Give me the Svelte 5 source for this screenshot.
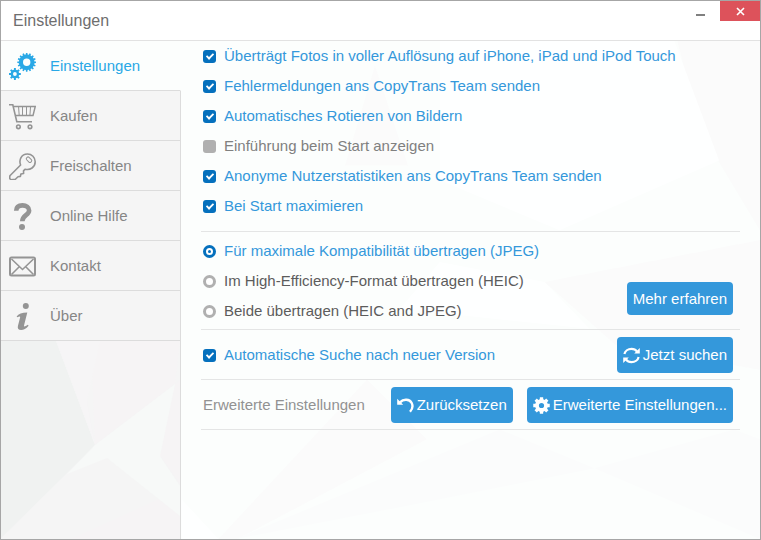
<script lang="ts">
  type IconName = "gears" | "cart" | "key" | "help" | "mail" | "info";

  const navItems: { id: IconName; label: string }[] = [
    { id: "gears", label: "Einstellungen" },
    { id: "cart", label: "Kaufen" },
    { id: "key", label: "Freischalten" },
    { id: "help", label: "Online Hilfe" },
    { id: "mail", label: "Kontakt" },
    { id: "info", label: "Über" },
  ];

  let active = $state<IconName>("gears");

  let options = $state([
    { label: "Überträgt Fotos in voller Auflösung auf iPhone, iPad und iPod Touch", on: true },
    { label: "Fehlermeldungen ans CopyTrans Team senden", on: true },
    { label: "Automatisches Rotieren von Bildern", on: true },
    { label: "Einführung beim Start anzeigen", on: false },
    { label: "Anonyme Nutzerstatistiken ans CopyTrans Team senden", on: true },
    { label: "Bei Start maximieren", on: true },
  ]);

  const formats = [
    { value: "jpeg", label: "Für maximale Kompatibilität übertragen (JPEG)" },
    { value: "heic", label: "Im High-Efficiency-Format übertragen (HEIC)" },
    { value: "both", label: "Beide übertragen (HEIC and JPEG)" },
  ];
  let format = $state("jpeg");
  let autoUpdate = $state(true);

  // Cog outline with a round hole, drawn with the evenodd rule
  function gear(cx: number, cy: number, teeth: number, outer: number, inner: number, hole: number, half = 0.2): string {
    const step = (Math.PI * 2) / teeth;
    const pts: string[] = [];
    for (let i = 0; i < teeth; i++) {
      const a = i * step - Math.PI / 2;
      for (const [off, r] of [[-half - 0.1, inner], [-half, outer], [half, outer], [half + 0.1, inner]]) {
        const t = a + off * step;
        pts.push(`${(cx + r * Math.cos(t)).toFixed(2)} ${(cy + r * Math.sin(t)).toFixed(2)}`);
      }
    }
    return `M${pts.join("L")}ZM${cx - hole} ${cy}a${hole} ${hole} 0 1 0 ${hole * 2} 0a${hole} ${hole} 0 1 0 ${-hole * 2} 0Z`;
  }
</script>

{#snippet navIcon(name: IconName)}
  <svg class="nav-icon" width="27" height="27" viewBox="0 0 27 27" fill="none" stroke="currentColor" aria-hidden="true">
    {#if name === "gears"}
      <path d={gear(17.7, 9.3, 16, 9.4, 7.8, 3.7)} fill="currentColor" fill-rule="evenodd" stroke="none" />
      <path d={gear(5.9, 21, 8, 6, 4.3, 1.9)} fill="currentColor" fill-rule="evenodd" stroke="none" />
    {:else if name === "cart"}
      <path d="M0 1.7h3.8L7.8 18.8H23" stroke-width="1.6" />
      <path d="M4.4 3.6h21.8L24 12.6H6.6" stroke-width="1.5" />
      <path d="M9.6 4l.6 8.500M13.500 4v8.500M17.500 4v8.500M21.500 4l-.6 8.500" stroke-width="1" />
      <circle cx="9.4" cy="23.8" r="1.8" stroke-width="1.6" />
      <circle cx="21" cy="23.8" r="1.8" stroke-width="1.6" />
    {:else if name === "key"}
      <path
        d="M11.6 12C9.6 7 12.4 1 18.4 1c4.400 0 7.800 3.400 7.800 7.700 0 5.400-5 8.900-10.200 7.500l-1.500 1.700.1 2.600-2.700.5-.5 2.400-2.400.3-2.600 2.600-4.600.5-1.200-1.500.3-2.600Z"
        stroke-width="1.6"
        stroke-linejoin="round"
      />
      <rect x="17" y="5" width="6" height="3.400" rx="1.400" transform="rotate(45 20 6.700)" stroke-width="1" />
    {:else if name === "help"}
      <path d="M7.200 7.800c.1-3.500 2.500-5.400 6.300-5.400 4 0 6.600 1.900 6.600 5 0 4.800-6.800 4.800-6.800 10.800" stroke-width="4.600" />
      <circle cx="13" cy="24" r="3" fill="currentColor" stroke="none" />
    {:else if name === "mail"}
      <rect x="1" y="4.600" width="25" height="18" rx="1.500" stroke-width="2" />
      <path d="m2.500 6 11 10.500L24.500 6M2.500 21.500l8-8M24.500 21.500l-8-8" stroke-width="1.600" />
    {:else}
      <circle cx="16.800" cy="3" r="3" fill="currentColor" stroke="none" />
      <path
        d="M7.600 13.400c1.900-2.600 5.300-3.900 10.700-4L15 22.400c-.3 1.500.9 1.300 3.800-.6l.8 1c-2.500 2.900-5 4.200-7.500 4.200-2.600 0-3.800-1.500-3.200-4l2.200-8.500c.3-1.300-.9-1.400-2.700-.2Z"
        fill="currentColor"
        stroke="none"
      />
    {/if}
  </svg>
{/snippet}

<div class="window">
  <!-- Faceted backdrop behind the settings pane -->
  <svg class="backdrop" viewBox="0 0 761 540" preserveAspectRatio="none" aria-hidden="true">
    <path fill="#fbfbfb" d="M375 65 408 165 345 165ZM678 40h83v190l-60-100ZM545 282l216-42v130l-145-25ZM218 540 367 380l60 60-190 100Z" />
    <path fill="#fbfcfc" d="M500 430 595 469 380 512 235 540ZM735 430l26 10v100l-166-71Z" />
    <path fill="#feffff" d="M440 40h235l45 120-160 70-120-50ZM440 262l105 20 45 47-190-20ZM181 500l37 40-37 0Z" />
  </svg>

  <header class="titlebar">
    <h1>Einstellungen</h1>
    <button class="win-btn" type="button" aria-label="Minimieren">
      <svg width="9" height="9" viewBox="0 0 9 9" aria-hidden="true"><path fill="#808080" d="M0 7h9v2H0z" /></svg>
    </button>
    <button class="win-btn close" type="button" aria-label="Schließen">
      <svg width="9" height="9" viewBox="0 0 9 9" aria-hidden="true"><path d="m1 1 7 7M8 1 1 8" stroke="#fff" stroke-width="1.600" /></svg>
    </button>
  </header>

  <div class="body">
    <aside class="sidebar">
      <nav>
        {#each navItems as item (item.id)}
          <button
            class="nav-item"
            class:active={active === item.id}
            type="button"
            aria-current={active === item.id ? "page" : undefined}
            onclick={() => (active = item.id)}
          >
            {@render navIcon(item.id)}
            <span>{item.label}</span>
          </button>
        {/each}
      </nav>
      <div class="sidebar-fill">
        <svg viewBox="0 0 179 198" preserveAspectRatio="none" aria-hidden="true">
          <path fill="#f0f2f1" d="M0 0h55l39 104-28 28L0 197Z" />
          <path fill="#f6f4f5" d="M94 104 174 43 179 0H90ZM174 43l5-4v73l-20 3ZM70 198l88-40 21 16v24ZM159 115l20 28v-31Z" />
          <path fill="#f6f5f6" d="M55 0h44L86 60l8 44Z" />
          <path fill="#f7f9f8" d="m94 104 80-61-15 72 20 30v30l-73-58-40 16Z" />
        </svg>
      </div>
    </aside>

    <main class="content">
      <section class="group options">
        {#each options as option (option.label)}
          <label class="choice" class:on={option.on}>
            <input type="checkbox" bind:checked={option.on} />
            <span>{option.label}</span>
          </label>
        {/each}
      </section>

      <section class="group formats">
        <div role="radiogroup" aria-label="Format">
          {#each formats as f (f.value)}
            <label class="choice dark" class:on={format === f.value}>
              <input type="radio" name="format" value={f.value} bind:group={format} />
              <span>{f.label}</span>
            </label>
          {/each}
        </div>
        <button class="btn small" type="button">Mehr erfahren</button>
      </section>

      <section class="group bar">
        <label class="choice" class:on={autoUpdate}>
          <input type="checkbox" bind:checked={autoUpdate} />
          <span>Automatische Suche nach neuer Version</span>
        </label>
        <button class="btn" type="button">
          <svg width="17" height="17" viewBox="0 0 17 17" fill="none" stroke="currentColor" stroke-width="2.200" aria-hidden="true">
            <path d="M1.400 7C2 4 5 1.800 8.500 1.800c2.400 0 4.300 1 5.600 2.800M15.600 10c-.6 3-3.600 5.200-7.100 5.200-2.400 0-4.300-1-5.600-2.800" />
            <path d="M16.800 1v5.600h-5.600ZM.2 16v-5.600h5.600Z" fill="currentColor" stroke="none" />
          </svg>
          <span>Jetzt suchen</span>
        </button>
      </section>

      <section class="group bar">
        <span class="caption">Erweiterte Einstellungen</span>
        <button class="btn" type="button">
          <svg width="17" height="17" viewBox="0 0 17 17" fill="none" stroke="currentColor" aria-hidden="true">
            <path d="M3 5.400c3.500-3.800 9.600-3.400 11.700.6 1.400 2.800.8 6-1.700 8.800" stroke-width="2.400" />
            <path d="M.2 1.700v6h6Z" fill="currentColor" stroke="none" />
          </svg>
          <span>Zurücksetzen</span>
        </button>
        <button class="btn" type="button">
          <svg width="17" height="17" viewBox="0 0 17 17" fill="currentColor" aria-hidden="true">
            <path d={gear(8.5, 8.5, 8, 8.4, 6.4, 2.6, 0.25)} fill-rule="evenodd" />
          </svg>
          <span>Erweiterte Einstellungen...</span>
        </button>
      </section>
    </main>
  </div>
</div>

<style>
  :global(body) {
    margin: 0;
  }

  .window {
    position: relative;
    box-sizing: border-box;
    display: flex;
    flex-direction: column;
    min-height: 100vh;
    border: 1px solid #a6a6a6;
    background: #fcfefd;
    font-family: "Liberation Sans", Arial, sans-serif;
    font-size: 15px;
    line-height: 17px;
    color: #808080;
  }

  .backdrop {
    position: absolute;
    inset: 0;
    width: 100%;
    height: 100%;
  }

  button {
    font: inherit;
    border: 0;
    cursor: pointer;
  }

  /* Title bar */
  .titlebar {
    position: relative;
    display: flex;
    align-items: flex-start;
    height: 39px;
    border-bottom: 1px solid #e2e2e2;
    background: #fff;
  }

  h1 {
    flex: 1;
    margin: 0;
    padding-left: 12px;
    font-size: 16px;
    font-weight: 400;
    line-height: 39px;
    color: #6e6e6e;
  }

  .win-btn {
    display: flex;
    align-items: center;
    justify-content: center;
    width: 40px;
    height: 20px;
    padding: 0;
    background: transparent;
  }

  .win-btn.close {
    background: #dd525b;
  }

  .body {
    position: relative;
    flex: 1;
    display: flex;
  }

  /* Sidebar */
  .sidebar {
    flex: 0 0 180px;
    display: flex;
    flex-direction: column;
  }

  .nav-item {
    box-sizing: border-box;
    display: flex;
    align-items: center;
    gap: 14px;
    width: 100%;
    height: 50px;
    padding: 2px 8px 0;
    border-right: 1px solid #dcdcdc;
    border-bottom: 1px solid #dcdcdc;
    background: #f5f5f5;
    color: #868686;
    text-align: left;
  }

  .nav-item.active {
    border-right-color: transparent;
    background: #fcfefd;
    color: #29a8e6;
  }

  .nav-item span,
  .choice span,
  .btn span,
  .caption {
    padding-bottom: 2px;
  }

  .nav-icon {
    flex: none;
    color: #949494;
  }

  .active .nav-icon {
    color: #29a8e6;
  }

  .sidebar-fill {
    position: relative;
    flex: 1;
    border-right: 1px solid #dcdcdc;
    background: #f5f5f5;
  }

  .sidebar-fill svg {
    position: absolute;
    width: 100%;
    height: 100%;
  }

  /* Settings */
  .content {
    flex: 1;
    min-width: 0;
    padding: 0 20px;
  }

  .group {
    padding: 0 7px 10px 2px;
    border-bottom: 1px solid #e4e5e5;
  }

  .formats {
    display: flex;
    align-items: flex-end;
    justify-content: space-between;
    padding-top: 4px;
    padding-bottom: 3px;
  }

  .bar {
    display: flex;
    align-items: center;
    gap: 14px;
    padding-top: 7px;
    padding-bottom: 6px;
  }

  .bar > :first-child {
    flex: 1;
  }

  .choice {
    box-sizing: border-box;
    display: flex;
    align-items: center;
    gap: 8px;
    height: 30px;
    padding-top: 1px;
    cursor: pointer;
  }

  .choice.dark {
    color: #5c5c5c;
  }

  .choice.on {
    color: #3498db;
  }

  .caption {
    color: #929292;
  }

  input {
    appearance: none;
    flex: none;
    box-sizing: border-box;
    display: grid;
    place-items: center;
    width: 13px;
    height: 13px;
    margin: 0;
  }

  input[type="checkbox"] {
    border-radius: 3px;
    background: #b0b0b0;
  }

  input[type="checkbox"]:checked {
    background: #0570bd;
  }

  input[type="checkbox"]:checked::before {
    content: "";
    width: 6px;
    height: 3px;
    margin-bottom: 2px;
    border-left: 2px solid #fff;
    border-bottom: 2px solid #fff;
    transform: rotate(-45deg) scale(0.9);
  }

  input[type="radio"] {
    border: 3px solid #b0b0b0;
    border-radius: 50%;
    background: #fff;
  }

  input[type="radio"]:checked {
    border-color: #0570bd;
  }

  input[type="radio"]:checked::before {
    content: "";
    width: 3px;
    height: 3px;
    border-radius: 50%;
    background: #0570bd;
  }

  .btn {
    display: flex;
    align-items: center;
    gap: 3px;
    height: 36px;
    padding: 0 6px;
    border-radius: 4px;
    background: #3498db;
    color: #fff;
    white-space: nowrap;
  }

  .btn.small {
    height: 33px;
    margin-bottom: 11px;
  }
</style>
